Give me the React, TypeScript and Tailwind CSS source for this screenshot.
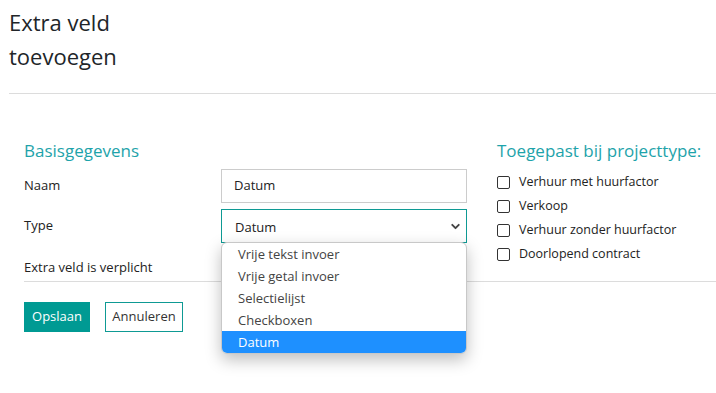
import { ChevronDown } from "lucide-react";

const PROJECT_TYPES = [
  "Verhuur met huurfactor",
  "Verkoop",
  "Verhuur zonder huurfactor",
  "Doorlopend contract",
];

const TYPE_OPTIONS = [
  "Vrije tekst invoer",
  "Vrije getal invoer",
  "Selectielijst",
  "Checkboxen",
  "Datum",
];

function Box() {
  return <span className="inline-block h-[13px] w-[13px] shrink-0 rounded-[2px] border-[1.5px] border-[#333] bg-white" />;
}

export default function App() {
  return (
    <div
      className="relative h-[393px] w-[716px] overflow-hidden bg-white text-[#222]"
      style={{ fontFamily: '"Open Sans", "Noto Sans", sans-serif' }}
    >
      <div className="px-[9px] pt-[5px]">
        <h1 className="text-[22px] font-normal leading-[34px] text-[#212529]">
          Extra veld
          <br />
          toevoegen
        </h1>
      </div>
      <hr className="mt-[20px] ml-[9px] border-t border-[#dcdcdc]" />

      <div className="pl-[24px] pt-[45px]">
        <div className="flex">
          <div className="w-[443px]">
            <h3 className="text-[17px] leading-[24px] text-[#1ea3aa]">Basisgegevens</h3>
            <div className="mt-[6px] flex flex-col text-[13px]">
              <div className="flex items-center">
                <label className="w-[197px]">Naam</label>
                <div className="flex h-[34px] w-[246px] items-center border border-[#ccc] px-[12px] text-[13px]">
                  Datum
                </div>
              </div>
              <div className="mt-[6px] flex items-center">
                <label className="w-[197px]">Type</label>
                <div className="flex h-[34px] w-[246px] items-center justify-between border border-[#0e9a94] pl-[13px] pr-[4px] text-[13px]">
                  <span className="pt-[4px]">Datum</span>
                  <ChevronDown className="h-[13px] w-[13px] text-[#444]" strokeWidth={3.5} />
                </div>
              </div>
              <div className="mt-[10px] flex items-start">
                <label className="w-[197px] pt-[5px] leading-[18px]">Extra veld is verplicht</label>
                <Box />
              </div>
            </div>
          </div>
          <div className="ml-[30px]">
            <h3 className="text-[17px] leading-[24px] text-[#1ea3aa]">Toegepast bij projecttype:</h3>
            <ul className="mt-[10px] flex flex-col gap-[6px] text-[12.5px]">
              {PROJECT_TYPES.map((t) => (
                <li key={t} className="flex h-[18px] items-center gap-[9px]">
                  <Box />
                  <span>{t}</span>
                </li>
              ))}
            </ul>
          </div>
        </div>

        <hr className="mt-[5px] border-t border-[#dcdcdc]" />

        <div className="mt-[20px] flex gap-[15px] text-[13px]">
          <button className="h-[30px] w-[66px] bg-[#009a93] text-white">Opslaan</button>
          <button className="h-[30px] w-[78px] border border-[#0e9a94] bg-white text-[#333]">Annuleren</button>
        </div>
      </div>

      <div className="absolute left-[221px] top-[242px] w-[246px] overflow-hidden rounded-[6px] border border-[#c8c8c8] bg-white shadow-[0_6px_16px_rgba(0,0,0,0.25)]">
        {TYPE_OPTIONS.map((o) => (
          <div
            key={o}
            className={`h-[22px] pl-[16px] text-[13px] leading-[22px] ${
              o === "Datum" ? "bg-[#1e90ff] text-white" : "text-[#444]"
            }`}
          >
            {o}
          </div>
        ))}
      </div>
    </div>
  );
}
